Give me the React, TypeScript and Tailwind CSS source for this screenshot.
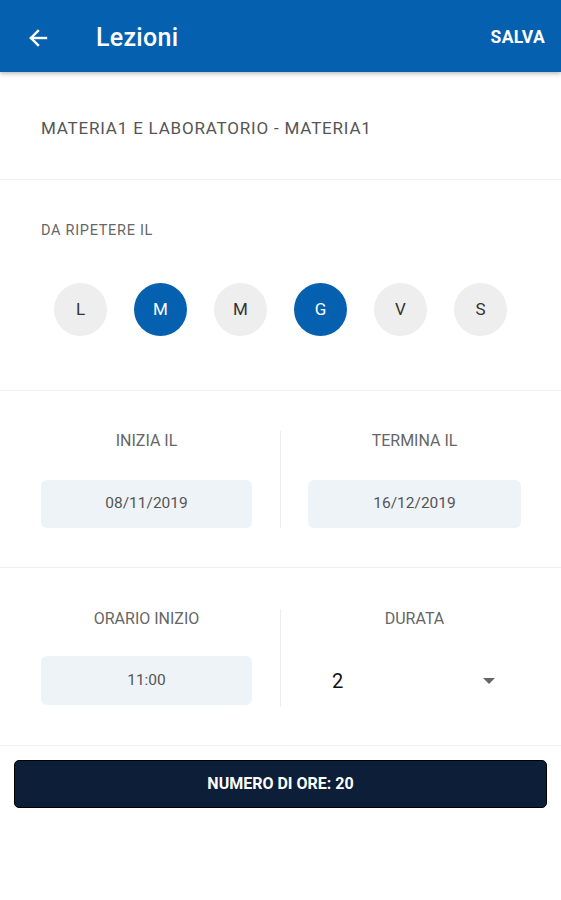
import React from "react";

const days = [
  { l: "L", on: false },
  { l: "M", on: true },
  { l: "M", on: false },
  { l: "G", on: true },
  { l: "V", on: false },
  { l: "S", on: false },
];

export default function App() {
  return (
    <div className="w-[561px] h-[900px] bg-white font-['Roboto',sans-serif] overflow-hidden">
      <header className="relative z-10 h-[72px] bg-[#0560b0] flex items-center pt-[3px] shadow-[0_2px_4px_rgba(0,0,0,0.25)]">
        <div className="w-[96px] pl-[26px] flex items-center">
          <svg width="24" height="24" viewBox="0 0 24 24" fill="none" stroke="white" strokeWidth="2.4" strokeLinecap="square">
            <path d="M20 12H5" />
            <path d="M12 5l-7 7 7 7" strokeLinejoin="miter" />
          </svg>
        </div>
        <div className="flex-1 text-white text-[25px] font-medium tracking-[0.3px]">Lezioni</div>
        <div className="pr-[16px] text-white text-[17.5px] font-bold tracking-[0.3px]">SALVA</div>
      </header>

      <section className="h-[108px] pt-[46px] pl-[41px] border-b border-[#f0f0f0]">
        <div className="text-[17px] leading-[20px] text-[#555555] tracking-[0.8px]">
          MATERIA1 E LABORATORIO - MATERIA1
        </div>
      </section>

      <section className="h-[211px] pt-[43px] border-b border-[#f0f0f0]">
        <div className="pl-[41px] text-[14.5px] leading-[16px] text-[#666666] tracking-[0.7px]">DA RIPETERE IL</div>
        <div className="mt-[44px] flex pl-[54px] gap-[27px]">
          {days.map((d, i) => (
            <div
              key={i}
              className={
                d.on
                  ? "w-[53px] h-[53px] rounded-full bg-[#0560b0] text-white flex items-center justify-center text-[17px]"
                  : "w-[53px] h-[53px] rounded-full bg-[#eeeeee] text-[#333333] flex items-center justify-center text-[17px]"
              }
            >
              {d.l}
            </div>
          ))}
        </div>
      </section>

      <section className="h-[177px] pt-[40px] border-b border-[#f0f0f0] grid grid-cols-[281px_280px]">
        <div className="pl-[41px] pr-[28px] border-r border-[#eeeeee] h-[97px] flex flex-col">
          <div className="w-full text-center text-[16px] leading-[20px] text-[#666666]">INIZIA IL</div>
          <div className="mt-[29px] w-full h-[48px] rounded-[6px] bg-[#eef3f7] flex items-center justify-center text-[15.5px] text-[#555555]">
            08/11/2019
          </div>
        </div>
        <div className="pl-[27px] pr-[40px] h-[97px] flex flex-col">
          <div className="w-full text-center text-[16px] leading-[20px] text-[#666666]">TERMINA IL</div>
          <div className="mt-[29px] w-full h-[48px] rounded-[6px] bg-[#eef3f7] flex items-center justify-center text-[15.5px] text-[#555555]">
            16/12/2019
          </div>
        </div>
      </section>

      <section className="h-[178px] pt-[41px] border-b border-[#f0f0f0] grid grid-cols-[281px_280px]">
        <div className="pl-[41px] pr-[28px] border-r border-[#eeeeee] h-[98px] flex flex-col">
          <div className="w-full text-center text-[16px] leading-[20px] text-[#666666]">ORARIO INIZIO</div>
          <div className="mt-[27px] w-full h-[49px] rounded-[6px] bg-[#eef3f7] flex items-center justify-center text-[15.5px] text-[#555555]">
            11:00
          </div>
        </div>
        <div className="pl-[27px] pr-[40px] h-[98px] flex flex-col">
          <div className="w-full text-center text-[16px] leading-[20px] text-[#666666]">DURATA</div>
          <div className="mt-[27px] w-full h-[49px] flex items-center pl-[24px] pr-[26px]">
            <span className="flex-1 text-[20px] text-[#111111]">2</span>
            <svg width="12" height="6" viewBox="0 0 12 6">
              <path d="M0 0h12L6 6z" fill="#666666" />
            </svg>
          </div>
        </div>
      </section>

      <div className="px-[14px] pt-[14px]">
        <div className="h-[48px] rounded-[5px] bg-[#0c1e38] border border-black flex items-center justify-center text-white text-[16px] font-bold">
          NUMERO DI ORE: 20
        </div>
      </div>
    </div>
  );
}
